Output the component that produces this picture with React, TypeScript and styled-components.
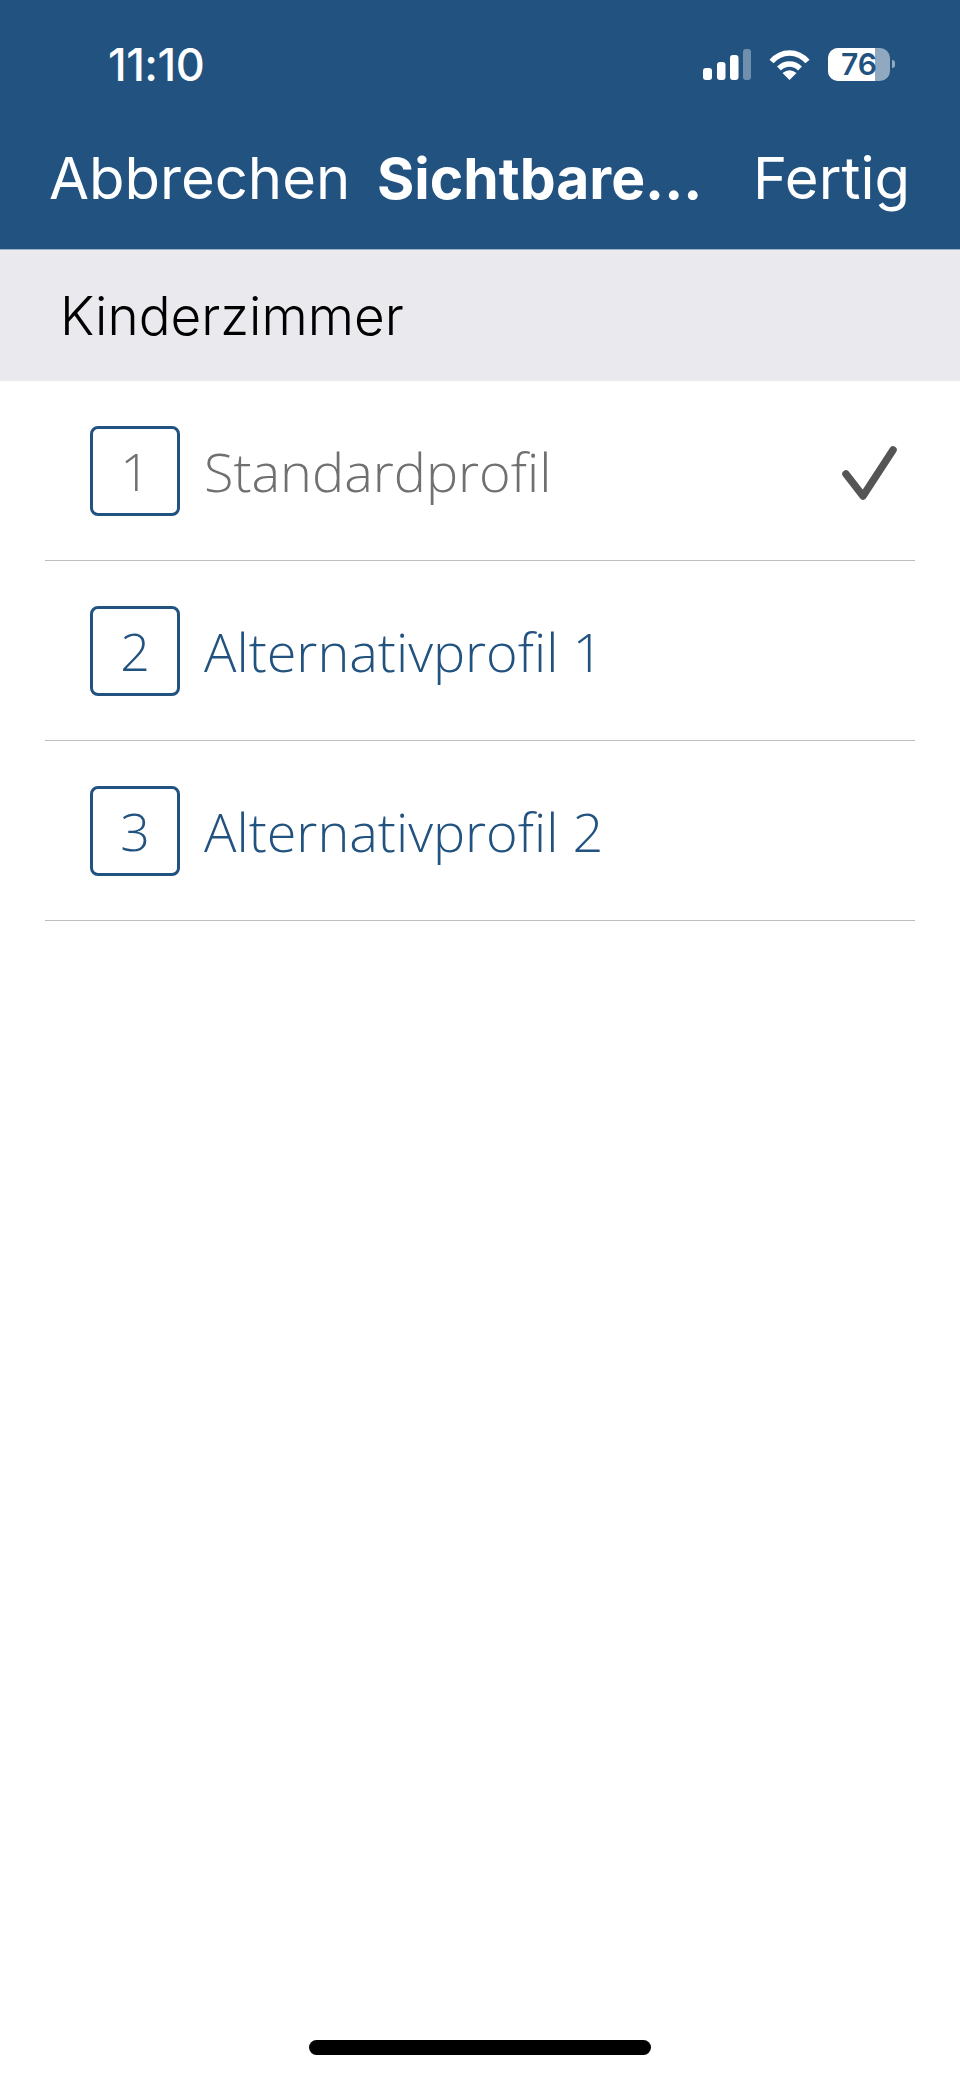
import styled, { createGlobalStyle } from "styled-components";

const GlobalStyle = createGlobalStyle`
  html, body {
    margin: 0;
    padding: 0;
    background: #fff;
  }
`

const profiles = [
    {id: 1, name: "Standardprofil", active: true},
    {id: 2, name: "Alternativprofil 1", active: false},
    {id: 3, name: "Alternativprofil 2", active: false},
]

export default function App() {
    return (
        <Page>
            <GlobalStyle/>
            <Header>
                <StatusBar>
                    <Time>11:10</Time>
                    <StatusIcons>
                        <svg width="48" height="31" viewBox="0 0 48 31" fill="#fff">
                            <rect x="0" y="19" width="9" height="12" rx="3"/>
                            <rect x="14" y="13" width="8.500" height="18" rx="3"/>
                            <rect x="27" y="6" width="8.500" height="25" rx="3"/>
                            <rect x="40" y="0" width="8" height="31" rx="3" opacity="0.35"/>
                        </svg>
                        <svg width="41" height="31" viewBox="0 0 41 31" fill="none">
                            <path d="M2.500 12.500 C12.500 1 28.500 1 38.500 12.500" stroke="#fff" strokeWidth="5.500"/>
                            <path d="M10 19.500 C16 13.500 25 13.500 31 19.500" stroke="#fff" strokeWidth="5.500"/>
                            <path d="M20.500 31 L13.500 24 Q20.500 18.500 27.500 24 Z" fill="#fff"/>
                        </svg>
                        <Battery>
                            <BatteryBody>
                                <BatteryLevel/>
                                <BatteryText>76</BatteryText>
                            </BatteryBody>
                            <BatteryNub/>
                        </Battery>
                    </StatusIcons>
                </StatusBar>
                <NavBar>
                    <NavButton>Abbrechen</NavButton>
                    <NavTitle>Sichtbare...</NavTitle>
                    <NavButton>Fertig</NavButton>
                </NavBar>
            </Header>
            <SectionHeader>Kinderzimmer</SectionHeader>
            <List>
                {profiles.map((p) => (
                    <Row key={p.id}>
                        <NumberBox $active={p.active}>{p.id}</NumberBox>
                        <RowLabel $active={p.active}>{p.name}</RowLabel>
                        {p.active && (
                            <CheckIcon width="58" height="58" viewBox="0 0 58 58" fill="none">
                                <path d="M6 28 L23 50 L53 4" stroke="#555" strokeWidth="7.500" strokeLinecap="round" strokeLinejoin="round"/>
                            </CheckIcon>
                        )}
                    </Row>
                ))}
            </List>
            <HomeArea>
                <HomeBar/>
            </HomeArea>
        </Page>
    );
}

const Page = styled.div`
  display: flex;
  flex-direction: column;
  height: 2079px;
  overflow: hidden;
  background: #fff;
`

const Header = styled.header`
  box-sizing: border-box;
  height: 250px;
  background: #225380;
  border-bottom: 1px solid #9fb4ca;
  color: #fff;
  font-family: Inter, "Liberation Sans", sans-serif;
`

const StatusBar = styled.div`
  display: flex;
  align-items: center;
  justify-content: space-between;
  height: 64px;
  padding: 32px 65px 0 108px;
`

const Time = styled.div`
  font-size: 45px;
  font-weight: 500;
  letter-spacing: -0.5px;
`

const StatusIcons = styled.div`
  display: flex;
  align-items: center;
  gap: 18px;
`

const Battery = styled.div`
  display: flex;
  align-items: center;
  gap: 2px;
`

const BatteryBody = styled.div`
  position: relative;
  width: 62px;
  height: 33px;
  border-radius: 10px;
  overflow: hidden;
  background: rgba(255, 255, 255, 0.5);
`

const BatteryLevel = styled.div`
  height: 100%;
  width: 76%;
  background: #fff;
`

const BatteryText = styled.span`
  position: absolute;
  inset: 0;
  display: flex;
  align-items: center;
  justify-content: center;
  font-size: 30px;
  font-weight: 600;
  color: #225380;
`

const BatteryNub = styled.div`
  width: 3px;
  height: 8px;
  border-radius: 0 3px 3px 0;
  background: rgba(255, 255, 255, 0.5);
`

const NavBar = styled.div`
  display: flex;
  align-items: center;
  justify-content: space-between;
  height: 80px;
  padding: 42px 50px 0 49px;
`

const NavButton = styled.div`
  font-size: 58px;
  font-weight: 400;
`

const NavTitle = styled.div`
  margin-right: 24px;
  font-size: 57px;
  font-weight: 700;
`

const SectionHeader = styled.div`
  display: flex;
  align-items: center;
  height: 131px;
  padding-left: 60px;
  background: #eae9ee;
  color: #000;
  font-family: Inter, "Liberation Sans", sans-serif;
  font-size: 53px;
  font-weight: 300;
`

const List = styled.div`
  padding: 0 45px;
`

const Row = styled.div`
  box-sizing: border-box;
  display: flex;
  align-items: center;
  height: 180px;
  padding: 0 17px 0 45px;
  border-bottom: 1px solid #bdbdbd;
`

const NumberBox = styled.div<{ $active: boolean }>`
  box-sizing: border-box;
  display: flex;
  align-items: center;
  justify-content: center;
  width: 90px;
  height: 90px;
  border: 3px solid #225380;
  border-radius: 8px;
  font-family: "Open Sans", sans-serif;
  font-size: 52px;
  font-weight: 300;
  color: ${({$active}) => ($active ? "#707070" : "#225380")};
`

const RowLabel = styled.div<{ $active: boolean }>`
  margin-left: 24px;
  font-family: "Open Sans", sans-serif;
  font-size: 54px;
  font-weight: 300;
  color: ${({$active}) => ($active ? "#707070" : "#225380")};
`

const CheckIcon = styled.svg`
  margin-left: auto;
  margin-top: 8px;
`

const HomeArea = styled.div`
  display: flex;
  justify-content: center;
  margin-top: auto;
  padding-bottom: 24px;
`

const HomeBar = styled.div`
  width: 342px;
  height: 15px;
  border-radius: 8px;
  background: #000;
`
